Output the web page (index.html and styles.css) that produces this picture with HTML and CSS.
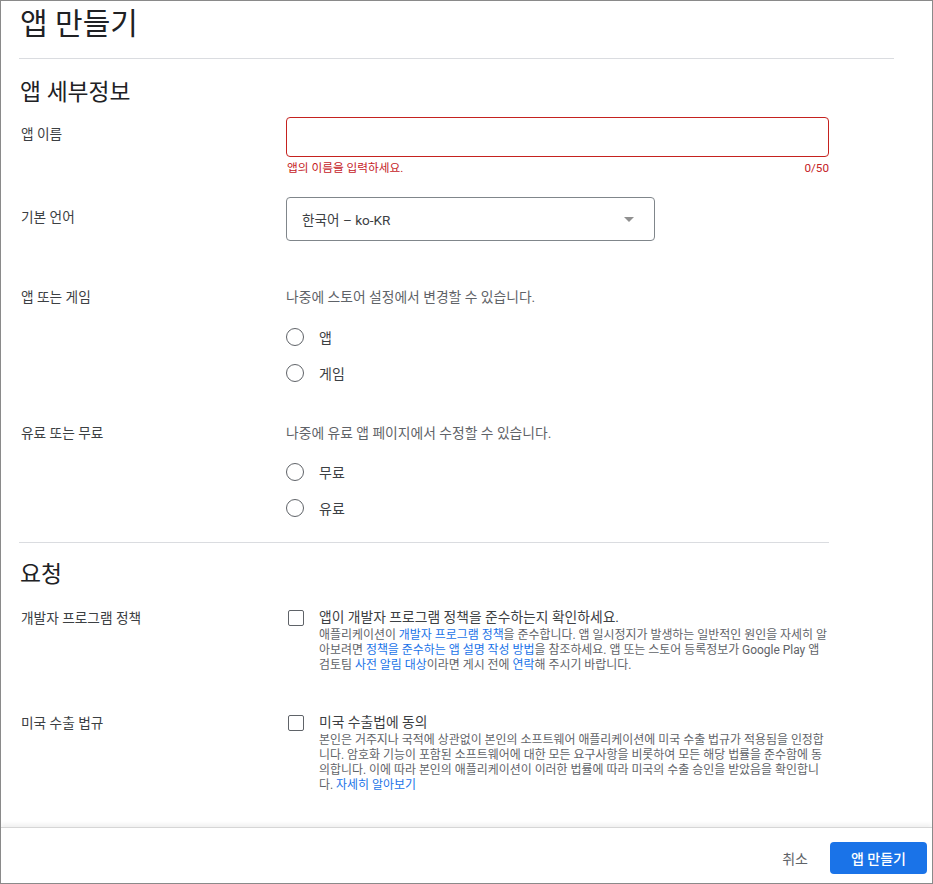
FILE: index.html
```html
<!DOCTYPE html>
<html lang="ko">
<head>
<meta charset="utf-8">
<title>앱 만들기</title>
<link rel="stylesheet" href="styles.css">
</head>
<body>
<div class="window">
  <main class="content">
    <h1 class="page-title">앱 만들기</h1>
    <hr class="title-rule">

    <section class="section">
      <h2 class="section-title">앱 세부정보</h2>

      <div class="row row-name">
        <div class="label label-name">앱 이름</div>
        <div class="control">
          <div class="text-field error"></div>
          <div class="field-hint">
            <span>앱의 이름을 입력하세요.</span>
            <span>0/50</span>
          </div>
        </div>
      </div>

      <div class="row row-lang">
        <div class="label label-lang">기본 언어</div>
        <div class="control">
          <div class="select">
            <span>한국어 – ko-KR</span>
            <span class="select-arrow"></span>
          </div>
        </div>
      </div>

      <div class="row row-type">
        <div class="label">앱 또는 게임</div>
        <div class="control">
          <div class="helper">나중에 스토어 설정에서 변경할 수 있습니다.</div>
          <div class="radio-group">
            <div class="radio"><span class="radio-circle"></span><span>앱</span></div>
            <div class="radio"><span class="radio-circle"></span><span>게임</span></div>
          </div>
        </div>
      </div>

      <div class="row row-price">
        <div class="label">유료 또는 무료</div>
        <div class="control">
          <div class="helper">나중에 유료 앱 페이지에서 수정할 수 있습니다.</div>
          <div class="radio-group">
            <div class="radio"><span class="radio-circle"></span><span>무료</span></div>
            <div class="radio"><span class="radio-circle"></span><span>유료</span></div>
          </div>
        </div>
      </div>
    </section>

    <hr class="section-rule">

    <section class="section">
      <h2 class="section-title title-requests">요청</h2>

      <div class="row row-policy">
        <div class="label label-check">개발자 프로그램 정책</div>
        <div class="control check-row">
          <span class="checkbox"></span>
          <div class="check-text">
            <div class="check-title">앱이 개발자 프로그램 정책을 준수하는지 확인하세요.</div>
            <p class="check-desc">애플리케이션이 <a href="#">개발자 프로그램 정책</a>을 준수합니다. 앱 일시정지가 발생하는 일반적인 원인을 자세히 알아보려면 <a href="#">정책을 준수하는 앱 설명 작성 방법</a>을 참조하세요. 앱 또는 스토어 등록정보가 Google Play 앱 검토팀 <a href="#">사전 알림 대상</a>이라면 게시 전에 <a href="#">연락</a>해 주시기 바랍니다.</p>
          </div>
        </div>
      </div>

      <div class="row row-export">
        <div class="label label-check">미국 수출 법규</div>
        <div class="control check-row">
          <span class="checkbox"></span>
          <div class="check-text">
            <div class="check-title">미국 수출법에 동의</div>
            <p class="check-desc">본인은 거주지나 국적에 상관없이 본인의 소프트웨어 애플리케이션에 미국 수출 법규가 적용됨을 인정합니다. 암호화 기능이 포함된 소프트웨어에 대한 모든 요구사항을 비롯하여 모든 해당 법률을 준수함에 동의합니다. 이에 따라 본인의 애플리케이션이 이러한 법률에 따라 미국의 수출 승인을 받았음을 확인합니다. <a href="#">자세히 알아보기</a></p>
          </div>
        </div>
      </div>
    </section>
  </main>

  <footer class="footer">
    <button class="btn btn-text" type="button">취소</button>
    <button class="btn btn-primary" type="button">앱 만들기</button>
  </footer>
</div>
</body>
</html>
```

FILE: styles.css
```css
* { box-sizing: border-box; }

html, body {
  margin: 0;
  padding: 0;
  background: #ffffff;
}

body {
  font-family: Roboto, "Noto Sans CJK KR", "Noto Sans", sans-serif;
  color: #202124;
}

.window {
  width: 933px;
  height: 884px;
  border: 1px solid #8a8a8a;
  display: flex;
  flex-direction: column;
  overflow: hidden;
}

.content {
  flex: 1;
  padding: 4px 0 0 18px;
  overflow: hidden;
}

.page-title {
  margin: 0 0 16px 1px;
  font-size: 30px;
  line-height: 37px;
  font-weight: 400;
  color: #202124;
}

.title-rule {
  margin: 0;
  width: 875px;
  border: 0;
  border-top: 1px solid #dadce0;
}

.section-title {
  margin: 20px 0 10px 1px;
  font-size: 22.8px;
  line-height: 28px;
  font-weight: 400;
  color: #202124;
}

.title-requests {
  margin-top: 18px;
  margin-bottom: 18px;
}

.row {
  display: grid;
  grid-template-columns: 267px 543px;
}

.label {
  font-size: 13.7px;
  line-height: 20px;
  color: #3c4043;
  padding-left: 2px;
}

.label-name { padding-top: 7px; }
.label-lang { padding-top: 10px; }
.label-check { padding-top: 1px; }

.control {
  min-width: 0;
}

.text-field {
  height: 40px;
  border-radius: 4px;
  border: 1px solid #c5221f;
}

.field-hint {
  display: flex;
  justify-content: space-between;
  margin-top: 4px;
  font-size: 11.7px;
  line-height: 14px;
  color: #c5221f;
  padding-left: 1px;
}

.row-lang { margin-top: 22px; }

.select {
  width: 369px;
  height: 44px;
  border: 1px solid #80868b;
  border-radius: 4px;
  display: flex;
  align-items: center;
  justify-content: space-between;
  padding: 0 20px 0 15px;
  font-size: 13.6px;
  color: #3c4043;
}

.select-arrow {
  width: 0;
  height: 0;
  border-left: 5px solid transparent;
  border-right: 5px solid transparent;
  border-top: 5px solid #909090;
  margin-top: 1px;
}

.row-type { margin-top: 46px; }
.row-price { margin-top: 32px; }

.helper {
  font-size: 13.8px;
  line-height: 20px;
  color: #5f6368;
}

.radio-group {
  margin-top: 12px;
}

.row-price .radio-group { margin-top: 11px; }

.radio {
  height: 36px;
  display: flex;
  align-items: center;
  gap: 15px;
  font-size: 14px;
  color: #3c4043;
}

.radio-circle {
  width: 18px;
  height: 18px;
  border-radius: 50%;
  border: 1.5px solid #5f6368;
  flex: none;
}

.section-rule {
  margin: 16px 0 0 0;
  width: 810px;
  border: 0;
  border-top: 1px solid #dadce0;
}

.row-policy { margin-top: 0; }
.row-export { margin-top: 39px; }

.check-row {
  display: flex;
  align-items: flex-start;
  gap: 15px;
}

.checkbox {
  flex: none;
  width: 16px;
  height: 16px;
  margin: 3px 0 0 2px;
  border: 1.5px solid #5f6368;
  border-radius: 2px;
}

.check-text {
  flex: 1;
  min-width: 0;
}

.check-title {
  font-size: 13.8px;
  line-height: 20px;
  color: #3c4043;
}

.check-desc {
  margin: 1px 0 0 0;
  font-size: 11.95px;
  line-height: 15px;
  color: #5f6368;
}

.check-desc a {
  color: #1a73e8;
  text-decoration: none;
}

.footer {
  flex: none;
  height: 56px;
  border-top: 1px solid #d6d6d6;
  box-shadow: 0 -3px 4px rgba(0, 0, 0, 0.06);
  display: flex;
  justify-content: flex-end;
  align-items: flex-start;
  padding: 14px 5px 0 0;
  gap: 6px;
}

.btn {
  font-family: Roboto, "Noto Sans CJK KR", sans-serif;
  font-size: 14px;
  height: 32px;
  border: 0;
  border-radius: 4px;
  background: none;
  cursor: pointer;
}

.btn-text {
  color: #5f6368;
  padding: 0 16px;
}

.btn-primary {
  width: 97px;
  background: #1a73e8;
  color: #ffffff;
  font-weight: 500;
}
```
